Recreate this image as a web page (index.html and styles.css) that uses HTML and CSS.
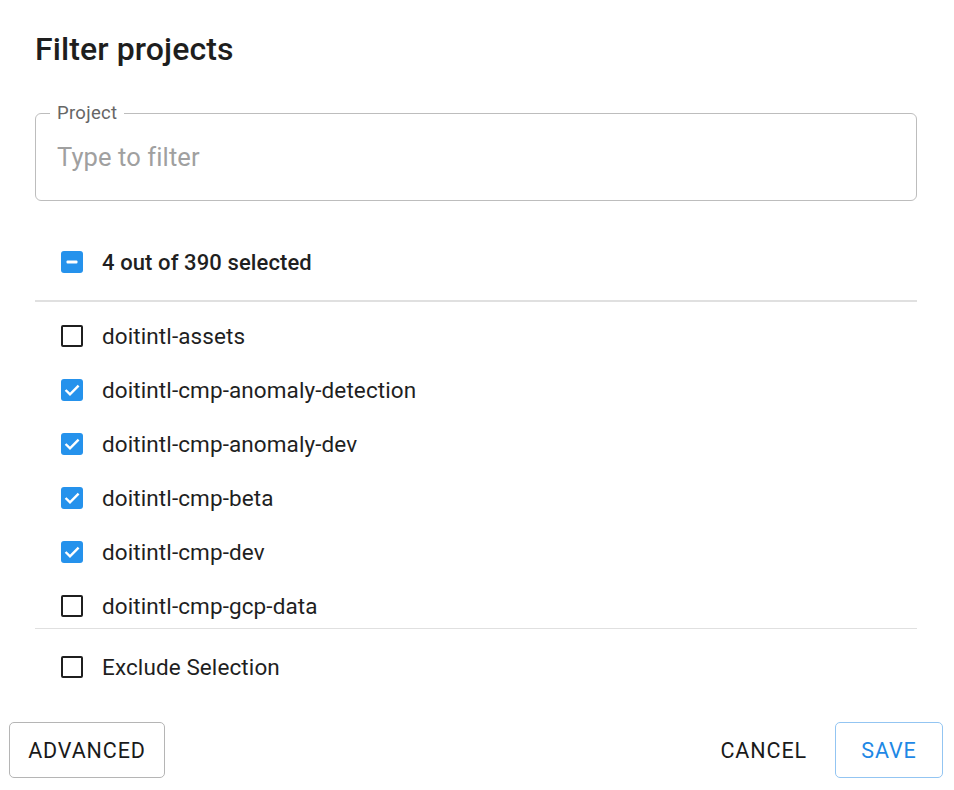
FILE: index.html
```html
<!DOCTYPE html>
<html>
<head>
<meta charset="utf-8">
<link rel="stylesheet" href="styles.css">
</head>
<body>
<div class="dialog">
  <h1 class="title">Filter projects</h1>
  <div class="content">
    <fieldset class="field">
      <legend class="field-label">Project</legend>
      <div class="placeholder">Type to filter</div>
    </fieldset>
    <div class="row row-head">
      <span class="cb cb-ind"><svg viewBox="0 0 22 22" width="22" height="22"><rect x="5.5" y="9.5" width="11" height="3" rx="1" fill="#fff"/></svg></span>
      <span class="label label-strong">4 out of 390 selected</span>
    </div>
    <div class="divider"></div>
    <div class="list">
      <div class="row"><span class="cb"></span><span class="label">doitintl-assets</span></div>
      <div class="row"><span class="cb cb-on"><svg viewBox="0 0 22 22" width="22" height="22"><path d="M4.6 11 L9 15.4 L17.6 6.6" fill="none" stroke="#fff" stroke-width="2.4"/></svg></span><span class="label">doitintl-cmp-anomaly-detection</span></div>
      <div class="row"><span class="cb cb-on"><svg viewBox="0 0 22 22" width="22" height="22"><path d="M4.6 11 L9 15.4 L17.6 6.6" fill="none" stroke="#fff" stroke-width="2.4"/></svg></span><span class="label">doitintl-cmp-anomaly-dev</span></div>
      <div class="row"><span class="cb cb-on"><svg viewBox="0 0 22 22" width="22" height="22"><path d="M4.6 11 L9 15.4 L17.6 6.6" fill="none" stroke="#fff" stroke-width="2.4"/></svg></span><span class="label">doitintl-cmp-beta</span></div>
      <div class="row"><span class="cb cb-on"><svg viewBox="0 0 22 22" width="22" height="22"><path d="M4.6 11 L9 15.4 L17.6 6.6" fill="none" stroke="#fff" stroke-width="2.4"/></svg></span><span class="label">doitintl-cmp-dev</span></div>
      <div class="row"><span class="cb"></span><span class="label">doitintl-cmp-gcp-data</span></div>
    </div>
    <div class="divider"></div>
    <div class="row row-exclude"><span class="cb"></span><span class="label">Exclude Selection</span></div>
  </div>
  <div class="actions">
    <button class="btn btn-outline">ADVANCED</button>
    <div class="spacer"></div>
    <button class="btn btn-text">CANCEL</button>
    <button class="btn btn-primary">SAVE</button>
  </div>
</div>
</body>
</html>
```
FILE: styles.css
```css
* { box-sizing: border-box; }
html, body { margin: 0; padding: 0; background: #fff; }
body { font-family: Roboto, "Noto Sans", "Liberation Sans", sans-serif; color: #212121; width: 954px; height: 790px; overflow: hidden; }

.dialog { display: flex; flex-direction: column; height: 790px; }

.title {
  margin: 0;
  padding: 29px 35px 0;
  font-size: 32px;
  line-height: 40px;
  font-weight: 500;
  color: #1e1e1e;
  letter-spacing: 0.1px;
}

.content { padding: 0 37px 0 35px; }

.field {
  margin: 35px 0 0;
  padding: 0 21px;
  height: 97px;
  border: 1.3px solid #bdbdbd;
  border-radius: 6px;
  display: flex;
  align-items: center;
}
.field-label {
  margin-left: -7px;
  padding: 0 7px;
  font-size: 18.5px;
  line-height: 18px;
  color: #666;
  letter-spacing: 0.3px;
}
.placeholder {
  font-size: 25.5px;
  color: #a0a0a0;
  margin-top: -9px;
  letter-spacing: 0.1px;
}

.row {
  display: flex;
  align-items: center;
  height: 54px;
  padding-left: 26px;
  gap: 19px;
}
.row-head { margin-top: 34px; margin-bottom: 11px; }
.label { font-size: 22.5px; color: #1f1f1f; letter-spacing: 0.1px; }
.label-strong { font-weight: 500; font-size: 22px; }

.divider { height: 1.5px; background: #e0e0e0; }

.list { height: 326px; overflow: hidden; padding-top: 7px; }

.row-exclude { margin-top: 11px; }

.cb {
  width: 22px; height: 22px; flex: none;
  border: 2px solid #1f1f1f;
  border-radius: 2px;
  display: block;
}
.cb svg { display: block; }
.cb-on, .cb-ind { background: #2592ec; border: none; border-radius: 3px; }

.actions {
  display: flex;
  align-items: center;
  padding: 0 11px 0 9px;
  margin-top: 28px;
}
.spacer { flex: 1; }
.btn {
  font-family: Roboto, "Noto Sans", sans-serif;
  font-size: 21.5px;
  letter-spacing: 0.9px;
  height: 56px;
  background: #fff;
  border-radius: 5px;
  cursor: pointer;
  color: #1a1a1a;
  font-weight: 400;
}
.btn-outline { width: 156px; border: 1.3px solid #b5b5b5; }
.btn-text { border: none; padding: 0; margin-right: 28px; }
.btn-primary { width: 108px; border: 1.3px solid #93c5f2; color: #1e88e5; }
```
